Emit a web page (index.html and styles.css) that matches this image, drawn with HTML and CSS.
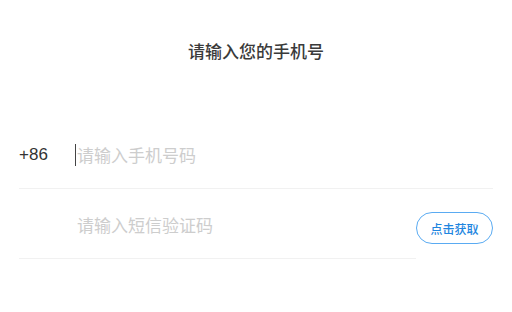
FILE: index.html
```html
<!DOCTYPE html>
<html lang="zh">
<head>
<meta charset="utf-8">
<link rel="stylesheet" href="styles.css">
</head>
<body>
<div class="page">
  <h1 class="title">请输入您的手机号</h1>
  <div class="form">
    <div class="row row-phone">
      <span class="prefix">+86</span>
      <span class="caret"></span>
      <input class="field" type="text" placeholder="请输入手机号码">
    </div>
    <div class="row-code">
      <div class="row row-code-input">
        <span class="prefix"></span>
        <input class="field" type="text" placeholder="请输入短信验证码">
      </div>
      <button class="get-code" type="button">点击获取</button>
    </div>
  </div>
</div>
</body>
</html>
```
FILE: styles.css
```css
html, body {
  margin: 0;
  padding: 0;
  background: #ffffff;
}
body {
  font-family: "Liberation Sans", "Noto Sans CJK SC", sans-serif;
  color: #333333;
}
.page {
  padding: 0 19px;
}
.title {
  margin: 0;
  padding-top: 38px;
  height: 26px;
  line-height: 26px;
  font-size: 17px;
  font-weight: 500;
  text-align: center;
  color: #3a3a3a;
  font-family: "Noto Sans CJK SC", sans-serif;
}
.form {
  margin-top: 55px;
}
.row {
  display: flex;
  align-items: center;
  height: 69px;
  border-bottom: 1px solid #f1f1f1;
  padding-top: 2px;
  box-sizing: content-box;
}
.row-phone {
  height: 67px;
}
.prefix {
  width: 56px;
  flex: none;
  font-size: 17px;
  color: #333333;
}
.caret {
  width: 1px;
  height: 22px;
  background: #444444;
  flex: none;
  margin-right: 1px;
}
.field {
  flex: 1;
  min-width: 0;
  border: none;
  outline: none;
  padding: 0;
  margin: 0;
  font-size: 17px;
  font-family: "Noto Sans CJK SC", sans-serif;
  color: #333333;
  background: transparent;
}
.field::placeholder {
  color: #cdcdcd;
}
.row-code {
  display: flex;
  align-items: flex-start;
}
.row-code-input {
  flex: 1;
  height: 67px;
}
.row-code-input .prefix {
  width: 58px;
}
.get-code {
  flex: none;
  width: 77px;
  height: 32px;
  margin-top: 23px;
  border: 1px solid #5aabf2;
  border-radius: 16px;
  background: #ffffff;
  color: #1f86e0;
  font-size: 12px;
  font-weight: 500;
  font-family: "Noto Sans CJK SC", sans-serif;
  padding: 0;
}
```
